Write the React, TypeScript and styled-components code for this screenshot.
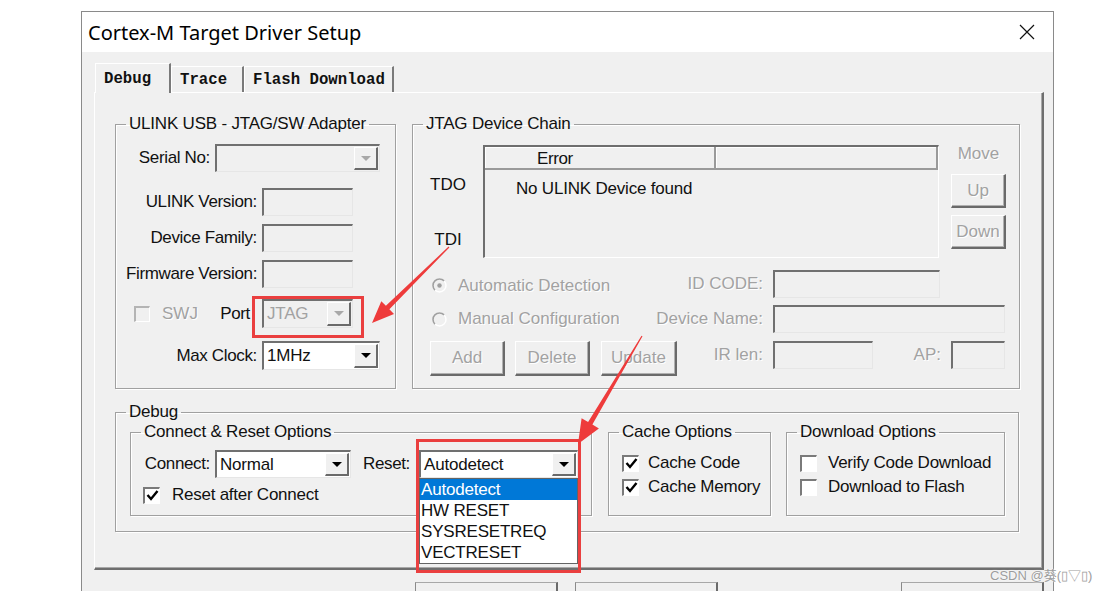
import React from 'react';
import styled, { createGlobalStyle } from 'styled-components';

const GlobalStyle = createGlobalStyle`
  html, body { margin: 0; padding: 0; background: #fff; }
  body { font-family: "Liberation Sans", Arial, sans-serif; overflow: hidden; }
  * { box-sizing: border-box; }
`;

const Page = styled.div`
  position: relative;
  width: 1102px;
  height: 591px;
  padding: 11px 0 0 81px;
  overflow: hidden;
`;

const Dialog = styled.div`
  width: 973px;
  height: 600px;
  border: 1px solid #8a8a8a;
  background: #f0f0f0;
  display: flex;
  flex-direction: column;
`;

const TitleBar = styled.div`
  height: 40px;
  flex-shrink: 0;
  background: #fff;
  display: flex;
  align-items: center;
  justify-content: space-between;
  padding: 0 18px 0 6px;
`;

const TitleText = styled.span`
  font-family: "Noto Sans", "Liberation Sans", sans-serif;
  font-size: 20px;
  color: #000;
`;

const Body = styled.div`
  flex: 1;
  padding: 0 9px 0 12px;
`;

const TabStrip = styled.div`
  height: 40px;
  display: flex;
  align-items: flex-end;
  padding-left: 1px;
`;

const Tab = styled.div<{ $w: number; $active?: boolean }>`
  position: relative;
  z-index: ${p => (p.$active ? 2 : 1)};
  width: ${p => p.$w}px;
  height: ${p => (p.$active ? 30 : 26)}px;
  margin-bottom: ${p => (p.$active ? -1 : 0)}px;
  padding-left: 8px;
  display: flex;
  align-items: center;
  background: #f0f0f0;
  border-style: solid;
  border-width: 1px 2px 0 1px;
  border-color: #fff #7a7a7a #fff #fff;
  font-family: "Liberation Mono", "Courier New", monospace;
  font-weight: bold;
  font-size: 15.7px;
  color: #111;
  white-space: nowrap;
`;

const Panel = styled.div`
  height: 478px;
  padding: 21px 0 0 20px;
  border-style: solid;
  border-width: 1px 2px 2px 1px;
  border-color: #fff #6e6e6e #6e6e6e #fff;
  box-shadow: inset -1px -1px 0 #a8a8a8;
`;

const TopRow = styled.div`
  display: flex;
  gap: 16px;
`;

const Group = styled.fieldset<{ $w: number; $h: number; $ml?: number; $mt?: number }>`
  margin: ${p => p.$mt ?? 0}px 0 0 ${p => p.$ml ?? 0}px;
  padding: 0;
  min-width: 0;
  width: ${p => p.$w}px;
  height: ${p => p.$h}px;
  border: 1px solid #a0a0a0;
  box-shadow: inset 1px 1px 0 #fff, 1px 1px 0 #fff;
`;

const Legend = styled.legend`
  margin-left: 10px;
  padding: 0 3px;
  font-size: 17px;
  line-height: 20px;
  letter-spacing: -0.2px;
  color: #111;
  white-space: nowrap;
`;

const Content = styled.div<{ $pl?: number }>`
  padding-left: ${p => p.$pl ?? 0}px;
`;

const Row = styled.div<{ $mt: number; $h?: number; $top?: boolean }>`
  display: flex;
  align-items: ${p => (p.$top ? 'flex-start' : 'center')};
  margin-top: ${p => p.$mt}px;
  height: ${p => p.$h ?? 28}px;
`;

const Label = styled.span<{ $w?: number; $pr?: number; $gray?: boolean }>`
  flex-shrink: 0;
  ${p => (p.$w ? `width: ${p.$w}px; text-align: right;` : '')}
  padding-right: ${p => p.$pr ?? 5}px;
  font-size: 17px;
  line-height: 28px;
  white-space: nowrap;
  letter-spacing: ${p => (p.$gray ? 0 : -0.35)}px;
  color: ${p => (p.$gray ? '#a2a2a2' : '#111')};
  text-shadow: ${p => (p.$gray ? '1px 1px 0 #fff' : 'none')};
`;

const Sunken = styled.div<{ $w: number; $h?: number; $white?: boolean }>`
  position: relative;
  flex-shrink: 0;
  width: ${p => p.$w}px;
  height: ${p => p.$h ?? 28}px;
  display: flex;
  align-items: stretch;
  border-style: solid;
  border-width: 2px 1px 1px 2px;
  border-color: #707070 #e6e6e6 #e6e6e6 #707070;
  background: ${p => (p.$white ? '#fff' : '#f0f0f0')};
`;

const ComboText = styled.span<{ $gray?: boolean }>`
  flex: 1;
  display: flex;
  align-items: center;
  padding-left: 3px;
  font-size: 17px;
  letter-spacing: -0.2px;
  color: ${p => (p.$gray ? '#a2a2a2' : '#111')};
`;

const DropBtn = styled.span<{ $gray?: boolean }>`
  width: 24px;
  margin: 1px 1px 1px 0;
  display: flex;
  align-items: center;
  justify-content: center;
  background: #f0f0f0;
  border-style: solid;
  border-width: 1px 2px 2px 1px;
  border-color: #fff #6a6a6a #6a6a6a #fff;
  &::after {
    content: '';
    border-left: 5px solid transparent;
    border-right: 5px solid transparent;
    border-top: 5px solid ${p => (p.$gray ? '#a8a8a8' : '#000')};
  }
`;

const Mark = styled.div<{ $l: number; $t: number; $r: number; $b: number }>`
  position: absolute;
  left: ${p => p.$l}px;
  top: ${p => p.$t}px;
  right: ${p => p.$r}px;
  bottom: ${p => p.$b}px;
  border: 3px solid #ea3f3f;
  pointer-events: none;
  z-index: 5;
`;

const DropList = styled.div`
  position: absolute;
  left: -2px;
  top: calc(100% + 1px);
  width: 159px;
  border: 1px solid #646464;
  background: #fff;
  z-index: 4;
`;

const DropItem = styled.div<{ $sel?: boolean }>`
  height: 21px;
  line-height: 21px;
  padding-left: 1px;
  font-size: 17px;
  letter-spacing: -0.2px;
  color: ${p => (p.$sel ? '#fff' : '#111')};
  background: ${p => (p.$sel ? '#0078d7' : '#fff')};
`;

const Box = styled.span<{ $gray?: boolean; $size?: number }>`
  flex-shrink: 0;
  width: ${p => p.$size ?? 17}px;
  height: ${p => p.$size ?? 17}px;
  display: flex;
  align-items: center;
  justify-content: center;
  border-style: solid;
  border-width: 2px 1px 1px 2px;
  border-color: ${p => (p.$gray ? '#b4b4b4 #fff #fff #b4b4b4' : '#7a7a7a #fff #fff #7a7a7a')};
  background: ${p => (p.$gray ? '#f0f0f0' : '#fff')};
`;

const CheckText = styled.span<{ $gray?: boolean; $ml?: number }>`
  margin-left: ${p => p.$ml ?? 11}px;
  font-size: 17px;
  letter-spacing: ${p => (p.$gray ? 0 : -0.25)}px;
  color: ${p => (p.$gray ? '#a2a2a2' : '#111')};
  text-shadow: ${p => (p.$gray ? '1px 1px 0 #fff' : 'none')};
  white-space: nowrap;
`;

const Raised = styled.div<{ $w: number; $h: number; $ml?: number; $mt?: number }>`
  flex-shrink: 0;
  width: ${p => p.$w}px;
  height: ${p => p.$h}px;
  margin: ${p => p.$mt ?? 0}px 0 0 ${p => p.$ml ?? 0}px;
  display: flex;
  align-items: center;
  justify-content: center;
  border-style: solid;
  border-width: 1px 2px 2px 1px;
  border-color: #fff #6a6a6a #6a6a6a #fff;
  box-shadow: inset -1px -1px 0 #b0b0b0;
  font-size: 17px;
  color: #a2a2a2;
  text-shadow: 1px 1px 0 #fff;
`;

const ChainTop = styled.div`
  display: flex;
  margin-top: 11px;
  height: 113px;
`;

const PinCol = styled.div`
  width: 70px;
  display: flex;
  flex-direction: column;
  align-items: center;
  justify-content: space-between;
  padding: 30px 0 8px;
  font-size: 17px;
  line-height: 20px;
  color: #111;
`;

const ListView = styled.div`
  width: 456px;
  height: 113px;
  border-style: solid;
  border-width: 2px 1px 1px 2px;
  border-color: #6e6e6e #fff #fff #6e6e6e;
`;

const ListHeader = styled.div`
  display: flex;
  height: 23px;
`;

const HeadCell = styled.div<{ $w?: number }>`
  ${p => (p.$w ? `width: ${p.$w}px;` : 'flex: 1;')}
  padding-left: 52px;
  line-height: 23px;
  font-size: 17px;
  letter-spacing: -0.4px;
  color: #111;
  border-style: solid;
  border-width: 0 2px 2px 0;
  border-color: #9a9a9a;
  box-shadow: inset 1px 1px 0 #fff;
`;

const ListItem = styled.div`
  margin-top: 9px;
  padding-left: 31px;
  font-size: 17px;
  line-height: 20px;
  letter-spacing: -0.2px;
  color: #111;
`;

const MoveCol = styled.div`
  margin-left: 12px;
  width: 55px;
  display: flex;
  flex-direction: column;
  align-items: center;
`;

const GrayText = styled.span`
  font-size: 17px;
  line-height: 20px;
  margin-top: -1px;
  color: #a2a2a2;
  text-shadow: 1px 1px 0 #fff;
`;

const LeftPart = styled.div<{ $w: number; $pl?: number }>`
  flex-shrink: 0;
  width: ${p => p.$w}px;
  padding-left: ${p => p.$pl ?? 0}px;
  display: flex;
  align-items: center;
`;

const DebugRow = styled.div`
  display: flex;
`;

const Footer = styled.div`
  display: flex;
  margin-top: 12px;
  padding-left: 321px;
`;

const DlgButton = styled.div<{ $ml?: number; $auto?: boolean }>`
  width: 143px;
  height: 30px;
  margin-left: ${p => (p.$auto ? 'auto' : `${p.$ml ?? 0}px`)};
  border-style: solid;
  border-width: 1px 2px 2px 1px;
  border-color: #a8a8a8 #6a6a6a #6a6a6a #8a8a8a;
  background: #f0f0f0;
`;

const Overlay = styled.svg`
  position: absolute;
  left: 0;
  top: 0;
  pointer-events: none;
  z-index: 10;
`;

const Watermark = styled.span`
  position: absolute;
  left: 990px;
  top: 565px;
  z-index: 11;
  font-family: "Liberation Sans", "Noto Sans CJK SC", sans-serif;
  font-size: 13px;
  color: #9c9c9c;
  text-shadow: 0 0 2px #fff, 0 0 1px #fff;
  white-space: nowrap;
`;

function Combo({ w, h, text, gray, white }: { w: number; h?: number; text: string; gray?: boolean; white?: boolean }) {
  return (
    <Sunken $w={w} $h={h ?? 29} $white={white}>
      <ComboText $gray={gray}>{text}</ComboText>
      <DropBtn $gray={gray} />
    </Sunken>
  );
}

function CheckMark() {
  return (
    <svg width="13" height="13" viewBox="0 0 13 13">
      <polyline points="1.5,6 5,10 11.5,2" fill="none" stroke="#000" strokeWidth="2.4" />
    </svg>
  );
}

function Radio({ checked }: { checked?: boolean }) {
  return (
    <svg width="15" height="15" viewBox="0 0 15 15" style={{ flexShrink: 0 }}>
      <circle cx="7.5" cy="7.5" r="6.5" fill="#f0f0f0" stroke="#fff" strokeWidth="1.4" />
      <path d="M2.9 12.1 A6.5 6.5 0 0 1 12.1 2.9" fill="none" stroke="#a0a0a0" strokeWidth="1.6" />
      {checked && <circle cx="7.5" cy="7.5" r="2.2" fill="#a0a0a0" />}
    </svg>
  );
}

function CloseIcon() {
  return (
    <svg width="16" height="16" viewBox="0 0 16 16">
      <path d="M1 1 L15 15 M15 1 L1 15" stroke="#111" strokeWidth="1.2" />
    </svg>
  );
}

export default function App() {
  return (
    <>
      <GlobalStyle />
      <Page>
        <Dialog>
          <TitleBar>
            <TitleText>Cortex-M Target Driver Setup</TitleText>
            <CloseIcon />
          </TitleBar>
          <Body>
            <TabStrip>
              <Tab $w={76} $active>Debug</Tab>
              <Tab $w={73}>Trace</Tab>
              <Tab $w={150}>Flash Download</Tab>
            </TabStrip>
            <Panel>
              <TopRow>
                <Group $w={281} $h={275}>
                  <Legend>ULINK USB - JTAG/SW Adapter</Legend>
                  <Content>
                    <Row $mt={10}>
                      <Label $w={99}>Serial No:</Label>
                      <Combo w={165} h={28} text="" gray />
                    </Row>
                    <Row $mt={16}>
                      <Label $w={146}>ULINK Version:</Label>
                      <Sunken $w={91} />
                    </Row>
                    <Row $mt={8}>
                      <Label $w={146}>Device Family:</Label>
                      <Sunken $w={91} />
                    </Row>
                    <Row $mt={8}>
                      <Label $w={146}>Firmware Version:</Label>
                      <Sunken $w={91} />
                    </Row>
                    <Row $mt={11} $h={29}>
                      <LeftPart $w={146} $pl={18}>
                        <Box $gray $size={16} />
                        <CheckText $gray $ml={12}>SWJ</CheckText>
                        <Label $pr={12} style={{ marginLeft: 'auto' }}>Port</Label>
                      </LeftPart>
                      <Sunken $w={91} $h={29}>
                        <ComboText $gray>JTAG</ComboText>
                        <DropBtn $gray />
                        <Mark $l={-12} $t={-5} $r={-12} $b={-11} />
                      </Sunken>
                    </Row>
                    <Row $mt={13} $h={29}>
                      <Label $w={146}>Max Clock:</Label>
                      <Combo w={118} text="1MHz" white />
                    </Row>
                  </Content>
                </Group>

                <Group $w={608} $h={275}>
                  <Legend>JTAG Device Chain</Legend>
                  <Content>
                    <ChainTop>
                      <PinCol>
                        <span>TDO</span>
                        <span>TDI</span>
                      </PinCol>
                      <ListView>
                        <ListHeader>
                          <HeadCell $w={231}>Error</HeadCell>
                          <HeadCell />
                        </ListHeader>
                        <ListItem>No ULINK Device found</ListItem>
                      </ListView>
                      <MoveCol>
                        <GrayText>Move</GrayText>
                        <Raised $w={55} $h={34} $mt={10}>Up</Raised>
                        <Raised $w={55} $h={34} $mt={7}>Down</Raised>
                      </MoveCol>
                    </ChainTop>
                    <Row $mt={12}>
                      <LeftPart $w={228} $pl={19} style={{ paddingTop: 3 }}>
                        <Radio checked />
                        <CheckText $gray $ml={11}>Automatic Detection</CheckText>
                      </LeftPart>
                      <Label $w={132} $pr={10} $gray>ID CODE:</Label>
                      <Sunken $w={167} />
                    </Row>
                    <Row $mt={7}>
                      <LeftPart $w={228} $pl={19}>
                        <Radio />
                        <CheckText $gray $ml={11}>Manual Configuration</CheckText>
                      </LeftPart>
                      <Label $w={132} $pr={10} $gray>Device Name:</Label>
                      <Sunken $w={232} />
                    </Row>
                    <Row $mt={8} $h={35} $top>
                      <LeftPart $w={262} $pl={17}>
                        <Raised $w={75} $h={35}>Add</Raised>
                        <Raised $w={75} $h={35} $ml={10}>Delete</Raised>
                        <Raised $w={76} $h={35} $ml={11}>Update</Raised>
                      </LeftPart>
                      <Label $w={98} $pr={10} $gray>IR len:</Label>
                      <Sunken $w={100} />
                      <Label $w={78} $pr={10} $gray>AP:</Label>
                      <Sunken $w={54} />
                    </Row>
                  </Content>
                </Group>
              </TopRow>

              <Group $w={904} $h={130} $mt={13}>
                <Legend>Debug</Legend>
                <Content $pl={14}>
                  <DebugRow>
                    <Group $w={462} $h={94}>
                      <Legend>Connect &amp; Reset Options</Legend>
                      <Content>
                        <Row $mt={8}>
                          <Label $w={84}>Connect:</Label>
                          <Combo w={136} h={28} text="Normal" white />
                          <Label $w={68} $pr={9}>Reset:</Label>
                          <Sunken $w={159} $h={28} $white>
                            <ComboText>Autodetect</ComboText>
                            <DropBtn />
                            <DropList>
                              <DropItem $sel>Autodetect</DropItem>
                              <DropItem>HW RESET</DropItem>
                              <DropItem>SYSRESETREQ</DropItem>
                              <DropItem>VECTRESET</DropItem>
                            </DropList>
                            <Mark $l={-5} $t={-13} $r={-4} $b={-96} />
                          </Sunken>
                        </Row>
                        <Row $mt={8} $h={18}>
                          <LeftPart $w={300} $pl={12}>
                            <Box><CheckMark /></Box>
                            <CheckText $ml={12}>Reset after Connect</CheckText>
                          </LeftPart>
                        </Row>
                      </Content>
                    </Group>
                    <Group $w={163} $h={94} $ml={16}>
                      <Legend>Cache Options</Legend>
                      <Content $pl={13}>
                        <Row $mt={10} $h={22}>
                          <Box><CheckMark /></Box>
                          <CheckText $ml={9}>Cache Code</CheckText>
                        </Row>
                        <Row $mt={2} $h={22}>
                          <Box><CheckMark /></Box>
                          <CheckText $ml={9}>Cache Memory</CheckText>
                        </Row>
                      </Content>
                    </Group>
                    <Group $w={219} $h={94} $ml={15}>
                      <Legend>Download Options</Legend>
                      <Content $pl={13}>
                        <Row $mt={10} $h={22}>
                          <Box />
                          <CheckText>Verify Code Download</CheckText>
                        </Row>
                        <Row $mt={2} $h={22}>
                          <Box />
                          <CheckText>Download to Flash</CheckText>
                        </Row>
                      </Content>
                    </Group>
                  </DebugRow>
                </Content>
              </Group>
            </Panel>
            <Footer>
              <DlgButton />
              <DlgButton $ml={17} />
              <DlgButton $auto />
            </Footer>
          </Body>
        </Dialog>

        <Overlay width="1102" height="591" viewBox="0 0 1102 591">
          <polygon
            fill="#ee3b3b"
            points="449.4,247.4 389.4,309.3 394,314 372,323 381.3,301.2 385.9,305.8 448.6,246.6"
          />
          <polygon
            fill="#ee3b3b"
            points="642.5,336.3 592.4,424.6 598.9,428.5 578,444 581.6,418.3 588.1,422.1 641.5,335.7"
          />
        </Overlay>
        <Watermark>CSDN @葵(▯▽▯)</Watermark>
      </Page>
    </>
  );
}
